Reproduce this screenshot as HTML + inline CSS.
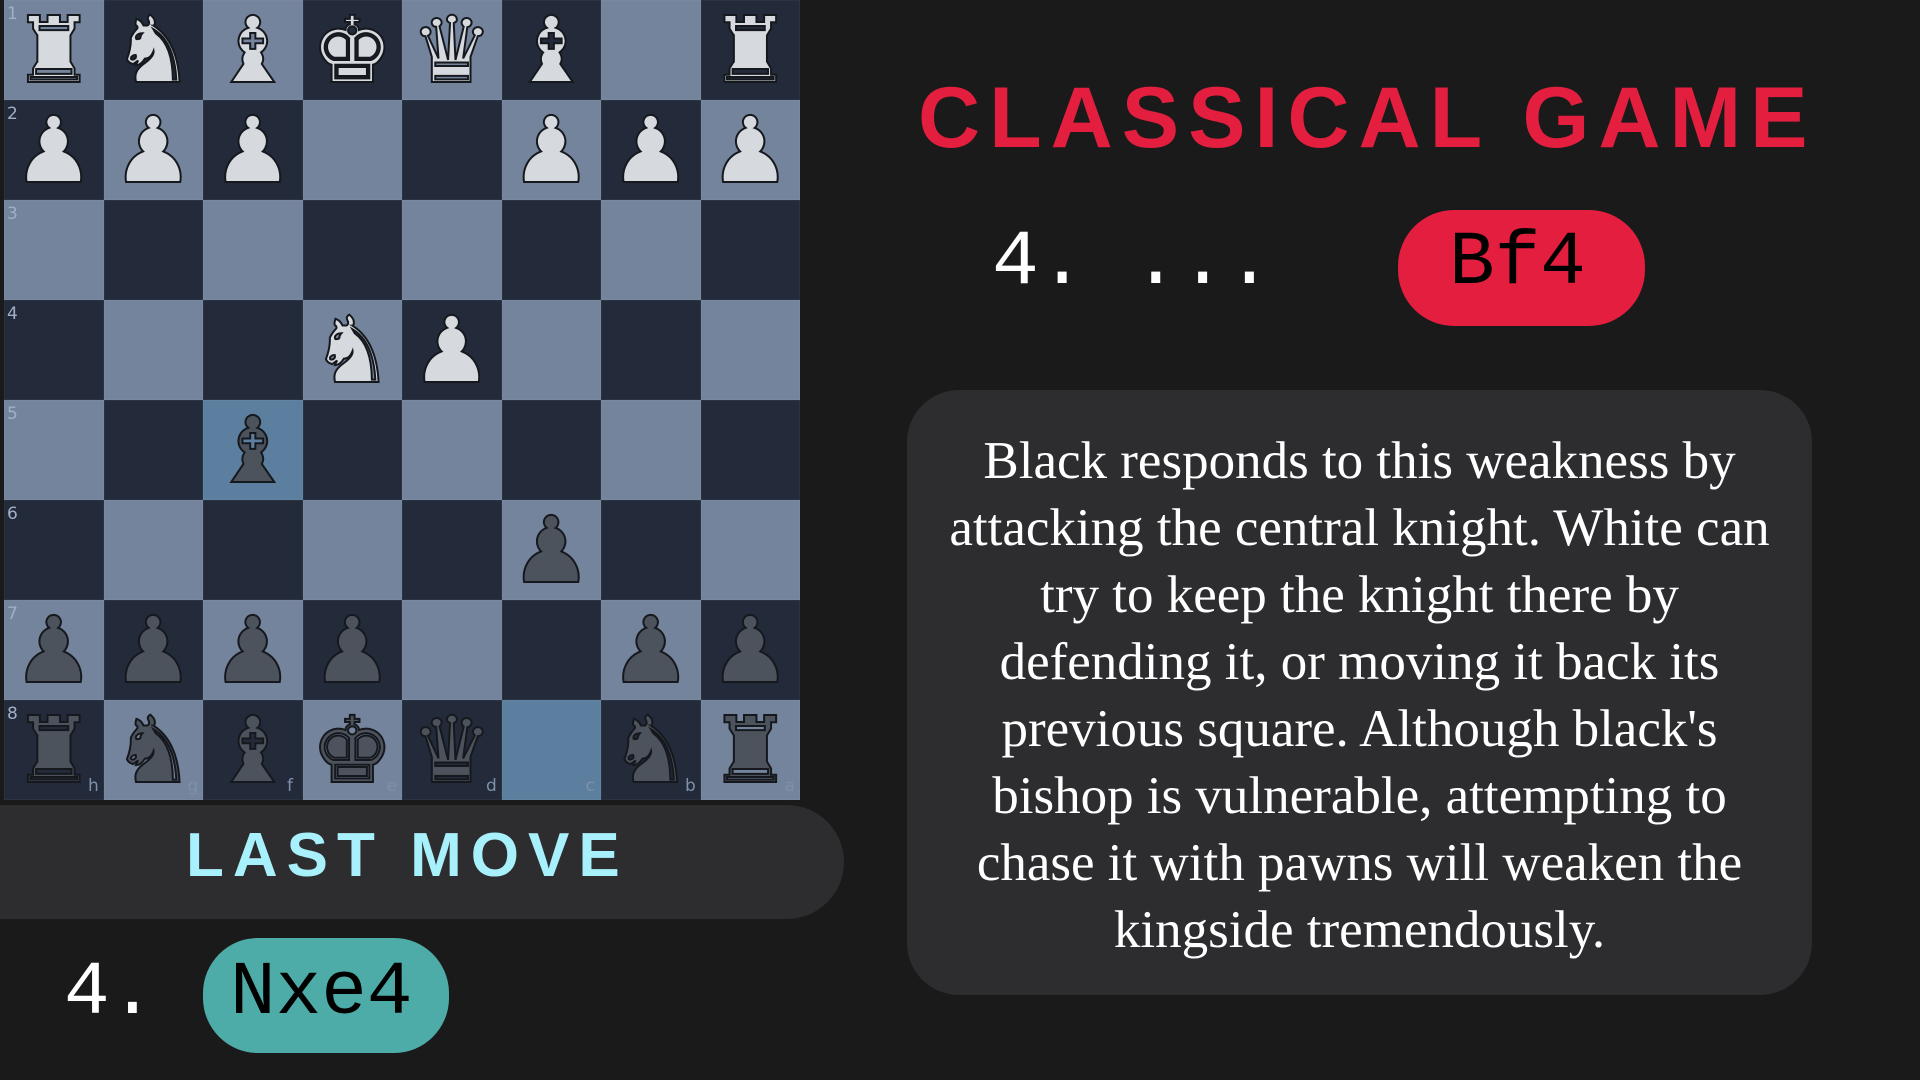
<!DOCTYPE html>
<html><head><meta charset="utf-8"><style>
*{margin:0;padding:0;box-sizing:border-box}
body{width:1920px;height:1080px;background:#1a1a1a;position:relative;overflow:hidden;font-family:"Liberation Sans",sans-serif}
.board{position:absolute;left:4px;top:0;width:796px;height:800px;background:#1e2433}
.sq{position:absolute;width:99.5px;height:100px;border:1px solid rgba(255,255,255,0.04)}
.l{background:#74849c}.d{background:#232a3a}
.hl{background:#5c7f9f}
.pc{position:absolute;width:99.5px;height:100px;text-align:center;line-height:100px;font-family:"DejaVu Sans",sans-serif;font-size:92px;-webkit-text-stroke:2px #15181d}
.w{color:#d6dadf}.b{color:#4d535c}
.lab{position:absolute;font-size:17px;color:#9fb0c8;font-family:"DejaVu Sans",sans-serif}
.pill{position:absolute;background:#2d2d2f}
.mono{font-family:"Liberation Mono","Courier New",monospace;position:absolute}
</style></head><body>
<div class="board" id="board"></div>

<div class="pill" style="left:0;top:805px;width:844px;height:114px;border-radius:0 57px 57px 0"></div>
<div style="position:absolute;left:186px;top:818px;font-size:62px;font-weight:bold;color:#a8f0fb;letter-spacing:9px;line-height:76px">LAST MOVE</div>

<div class="mono" style="left:64px;top:948px;font-size:76px;color:#fff;line-height:90px">4.</div>
<div style="position:absolute;left:203px;top:938px;width:246px;height:115px;border-radius:55px;background:#4eaca8"></div>
<div class="mono" style="left:230px;top:948px;font-size:76px;color:#000;line-height:90px">Nxe4</div>

<div style="position:absolute;left:918px;top:68px;font-size:86px;font-weight:bold;color:#e31e3e;letter-spacing:9px;line-height:100px;white-space:nowrap">CLASSICAL GAME</div>

<div class="mono" style="left:992px;top:218px;font-size:78px;color:#fff;line-height:90px;white-space:pre">4. ...</div>
<div style="position:absolute;left:1398px;top:210px;width:247px;height:116px;border-radius:56px;background:#e31e3e"></div>
<div class="mono" style="left:1449px;top:218px;font-size:76px;color:#000;line-height:90px">Bf4</div>

<div class="pill" style="left:907px;top:390px;width:905px;height:605px;border-radius:52px;padding-top:38px;text-align:center;color:#fff;font-family:'Liberation Serif',serif;font-size:53px;line-height:67px;white-space:nowrap">
Black responds to this weakness by<br>attacking the central knight. White can<br>try to keep the knight there by<br>defending it, or moving it back its<br>previous square. Although black's<br>bishop is vulnerable, attempting to<br>chase it with pawns will weaken the<br>kingside tremendously.
</div>

<script>
var b=document.getElementById('board');
var rows=[
"wR wN wB wK wQ wB .. wR",
"wP wP wP .. .. wP wP wP",
".. .. .. .. .. .. .. ..",
".. .. .. wN wP .. .. ..",
".. .. bB .. .. .. .. ..",
".. .. .. .. .. bP .. ..",
"bP bP bP bP .. .. bP bP",
"bR bN bB bK bQ .. bN bR"];
var g={R:'♜',N:'♞',B:'♝',K:'♚',Q:'♛',P:'♟'};
var files="hgfedcba";
var h='';
for(var r=0;r<8;r++){var cs=rows[r].split(' ');for(var c=0;c<8;c++){
var cls=((r+c)%2==0)?'l':'d';
if((r==4&&c==2)||(r==7&&c==5))cls='hl';
var x=c*99.5,y=r*100;
h+='<div class="sq '+cls+'" style="left:'+x+'px;top:'+y+'px"></div>';
if(cs[c]!='..'){h+='<div class="pc '+(cs[c][0]=='w'?'w':'b')+'" style="left:'+x+'px;top:'+(y+1)+'px">'+g[cs[c][1]]+'</div>';}
if(c==0)h+='<div class="lab" style="left:3px;top:'+(y+4)+'px">'+(r+1)+'</div>';
if(r==7)h+='<div class="lab" style="left:'+(x+84)+'px;top:776px;color:#7f90aa">'+files[c]+'</div>';
}}
b.innerHTML=h;
</script>
</body></html>
